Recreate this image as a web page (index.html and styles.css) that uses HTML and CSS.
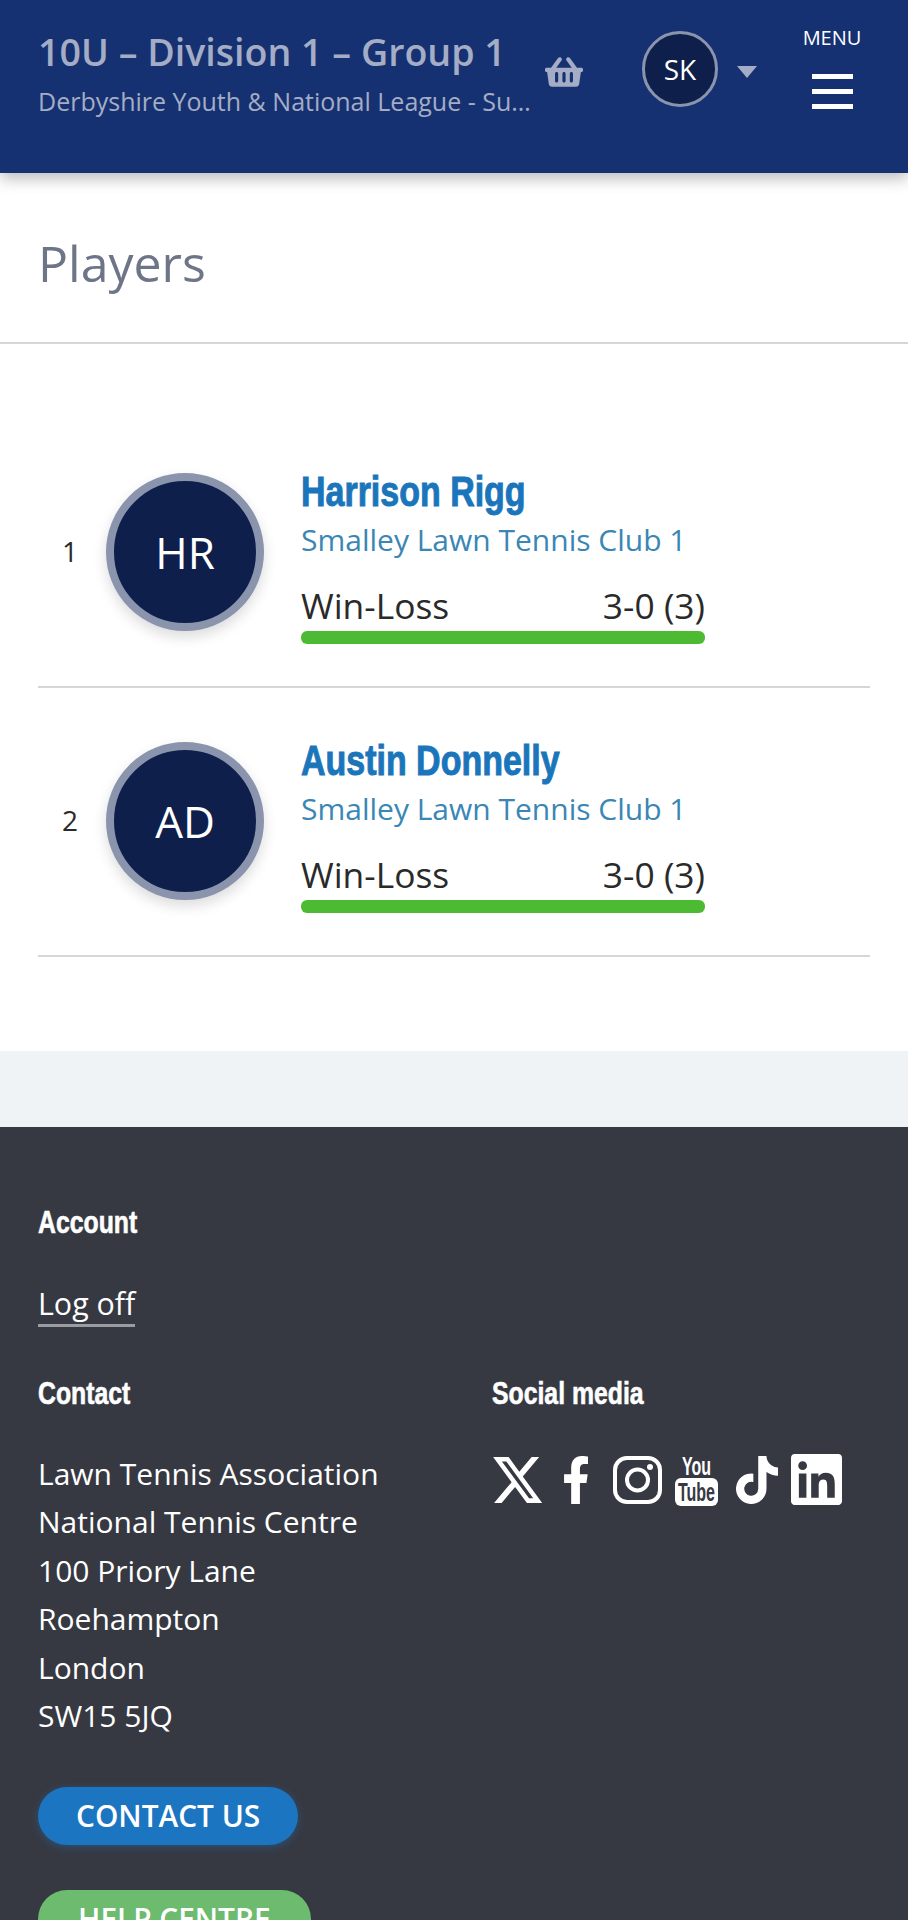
FILE: index.html
```html
<!DOCTYPE html>
<html lang="en">
<head>
    <meta charset="UTF-8">
    <meta name="viewport" content="width=device-width, initial-scale=1.0">
    <title>Players</title>
    <link rel="stylesheet" href="styles.css">
</head>
<body>
    <header class="top-bar">
        <div class="titles">
            <h1>10U – Division 1 – Group 1</h1>
            <p>Derbyshire Youth &amp; National League - Summer 2024</p>
        </div>
        <svg class="basket" viewBox="0 0 576 512" fill="currentColor"><path d="M576 216v16c0 13.255-10.745 24-24 24h-8l-26.113 182.788C514.509 462.435 494.257 480 470.37 480H105.63c-23.887 0-44.139-17.565-47.518-41.212L32 256h-8c-13.255 0-24-10.745-24-24v-16c0-13.255 10.745-24 24-24h67.341l106.78-146.821c10.395-14.292 30.407-17.453 44.701-7.058 14.293 10.395 17.453 30.408 7.058 44.701L170.477 192h235.046L326.12 82.821c-10.395-14.292-7.234-34.306 7.059-44.701 14.291-10.395 34.306-7.235 44.701 7.058L484.659 192H552c13.255 0 24 10.745 24 24zM312 392V280c0-13.255-10.745-24-24-24s-24 10.745-24 24v112c0 13.255 10.745 24 24 24s24-10.745 24-24zm112 0V280c0-13.255-10.745-24-24-24s-24 10.745-24 24v112c0 13.255 10.745 24 24 24s24-10.745 24-24zm-224 0V280c0-13.255-10.745-24-24-24s-24 10.745-24 24v112c0 13.255 10.745 24 24 24s24-10.745 24-24z"/></svg>
        <div class="user-badge">SK</div>
        <span class="caret"></span>
        <div class="menu">
            <span>MENU</span>
            <div class="burger"><i></i><i></i><i></i></div>
        </div>
    </header>

    <main class="content">
        <h2 class="page-title">Players</h2>
        <div class="player-list">
            <div class="player">
                <span class="rank">1</span>
                <div class="avatar">HR</div>
                <div class="info">
                    <a class="name">Harrison Rigg</a>
                    <a class="club">Smalley Lawn Tennis Club 1</a>
                    <div class="stat"><span>Win-Loss</span><span>3-0 (3)</span></div>
                    <div class="bar"></div>
                </div>
            </div>
            <div class="player">
                <span class="rank">2</span>
                <div class="avatar">AD</div>
                <div class="info">
                    <a class="name">Austin Donnelly</a>
                    <a class="club">Smalley Lawn Tennis Club 1</a>
                    <div class="stat"><span>Win-Loss</span><span>3-0 (3)</span></div>
                    <div class="bar"></div>
                </div>
            </div>
        </div>
    </main>

    <div class="band"></div>

    <footer class="footer">
        <h3>Account</h3>
        <a class="log-off">Log off</a>
        <div class="footer-cols">
            <div class="contact">
                <h3>Contact</h3>
                <address>
                    Lawn Tennis Association<br>
                    National Tennis Centre<br>
                    100 Priory Lane<br>
                    Roehampton<br>
                    London<br>
                    SW15 5JQ
                </address>
                <a class="btn btn-blue">CONTACT US</a>
                <a class="btn btn-green">HELP CENTRE</a>
            </div>
            <div class="social">
                <h3>Social media</h3>
                <div class="social-icons">
                    <svg class="ic-x" viewBox="1.2 2.2 21.6 19.6" fill="#fff" preserveAspectRatio="none"><path d="M18.244 2.25h3.308l-7.227 8.26 8.502 11.24H16.17l-5.214-6.817L4.99 21.75H1.68l7.73-8.835L1.254 2.25H8.08l4.713 6.231zm-1.161 17.52h1.833L7.084 4.126H5.117z"/></svg>
                    <svg class="ic-f" viewBox="22 0 298 512" fill="#fff" preserveAspectRatio="none"><path d="M279.14 288l14.22-92.66h-88.91v-60.13c0-25.35 12.42-50.06 52.24-50.06h40.42V6.26S260.43 0 225.36 0c-73.22 0-121.08 44.38-121.08 124.72v70.62H22.89V288h81.39v224h100.17V288z"/></svg>
                    <svg class="ic-insta" viewBox="0 0 49 48" fill="none" stroke="#fff"><rect x="2" y="2" width="45" height="44" rx="12" stroke-width="4"/><circle cx="24.5" cy="24" r="10.5" stroke-width="4"/><circle cx="37" cy="11" r="3" fill="#fff" stroke="none"/></svg>
                    <svg class="ic-yt" viewBox="0 0 43 52"><text class="yt-you" x="7" y="21" textLength="29" lengthAdjust="spacingAndGlyphs">You</text><rect x="0" y="24" width="43" height="28" rx="6" fill="#fff"/><text class="yt-tube" x="3" y="47" textLength="37" lengthAdjust="spacingAndGlyphs">Tube</text></svg>
                    <svg class="ic-tiktok" viewBox="0 0 448 512" fill="#fff" preserveAspectRatio="none"><path d="M448,209.91a210.06,210.06,0,0,1-122.77-39.25V349.38A162.55,162.55,0,1,1,185,188.31V278.2a74.62,74.62,0,1,0,52.23,71.18V0l88,0a121.18,121.18,0,0,0,1.86,22.17h0A122.18,122.18,0,0,0,381,102.39a121.43,121.43,0,0,0,67,20.14Z"/></svg>
                    <svg class="ic-in" viewBox="0 32 448 448" fill="#fff" preserveAspectRatio="none"><path d="M416 32H31.9C14.3 32 0 46.5 0 64.3v383.4C0 465.5 14.3 480 31.9 480H416c17.6 0 32-14.5 32-32.3V64.3c0-17.8-14.4-32.3-32-32.3zM135.4 416H69V202.2h66.5V416zm-33.2-243c-21.3 0-38.5-17.3-38.5-38.5S80.9 96 102.2 96c21.2 0 38.5 17.3 38.5 38.5 0 21.3-17.2 38.5-38.5 38.5zm282.1 243h-66.4V312c0-24.8-.5-56.7-34.5-56.7-34.6 0-39.9 27-39.9 54.9V416h-66.4V202.2h63.7v29.2h.9c8.9-16.8 30.6-34.5 62.9-34.5 67.2 0 79.7 44.3 79.7 101.9V416z"/></svg>
                </div>
            </div>
        </div>
    </footer>
</body>
</html>
```

FILE: styles.css
```css
* {
    margin: 0;
    padding: 0;
    box-sizing: border-box;
    font-family: "Open Sans", sans-serif;
}
html, body {
    height: 1920px;
    overflow: hidden;
}
body {
    background: #fff;
}

/* Top bar */
.top-bar {
    position: relative;
    z-index: 2;
    display: flex;
    align-items: flex-start;
    height: 173px;
    padding-left: 38px;
    background: #163172;
    color: #a4adc5;
    box-shadow: 0 6px 14px rgba(0, 0, 0, .25);
}
.titles {
    width: 495px;
    flex: none;
    margin-top: 29px;
}
.titles h1 {
    font-size: 37.6px;
    font-weight: 600;
    line-height: 46px;
    white-space: nowrap;
}
.titles p {
    font-size: 25px;
    line-height: 34px;
    margin-top: 9px;
    white-space: nowrap;
    overflow: hidden;
    text-overflow: ellipsis;
}
.basket {
    flex: none;
    width: 38px;
    height: 34px;
    margin: 55px 0 0 12px;
}
.user-badge {
    flex: none;
    display: flex;
    justify-content: center;
    align-items: center;
    width: 76px;
    height: 76px;
    margin: 31px 0 0 59px;
    border: 3px solid #8a94ad;
    border-radius: 50%;
    background: #0f1f4b;
    color: #fff;
    font-size: 28px;
}
.caret {
    flex: none;
    width: 0;
    height: 0;
    margin: 66px 0 0 19px;
    border-left: 10px solid transparent;
    border-right: 10px solid transparent;
    border-top: 12px solid #a4adc5;
}
.menu {
    flex: none;
    display: flex;
    flex-direction: column;
    align-items: center;
    width: 60px;
    margin: 24px 0 0 45px;
    color: #fff;
    font-size: 20px;
    line-height: 28px;
}
.burger {
    width: 41px;
    margin-top: 22px;
}
.burger i {
    display: block;
    height: 5px;
    margin-bottom: 10px;
    background: #fff;
}

/* Players */
.page-title {
    height: 171px;
    padding: 57px 38px 0;
    border-bottom: 2px solid #d6d6d6;
    color: #6f7588;
    font-size: 50px;
    font-weight: 400;
    line-height: 66px;
}
.player-list {
    margin: 0 38px;
    padding: 75px 0 94px;
}
.player {
    display: flex;
    align-items: flex-start;
    height: 268.5px;
    padding-top: 54px;
    border-bottom: 2px solid #d6d6d6;
}
.player:first-child {
    height: 269px;
}
.rank {
    flex: none;
    width: 64px;
    margin-right: 4px;
    color: #2a2a2a;
    font-size: 28px;
    line-height: 157px;
    text-align: center;
}
.avatar {
    flex: none;
    display: flex;
    justify-content: center;
    align-items: center;
    width: 158px;
    height: 158px;
    border: 8px solid #8a94ad;
    border-radius: 50%;
    background: #0f1f4b;
    box-shadow: 0 6px 14px rgba(0, 0, 0, .14);
    color: #fff;
    font-size: 44px;
}
.info {
    width: 404px;
    margin-left: 37px;
}
/* no condensed font here, so squeeze a bold one */
.name {
    display: block;
    margin-top: -2px;
    color: #1b75bb;
    font-family: "Liberation Sans", sans-serif;
    font-size: 43px;
    font-weight: 700;
    line-height: 40px;
    white-space: nowrap;
    -webkit-text-stroke: 1px #1b75bb;
    transform: scaleX(.79);
    transform-origin: left;
}
.club {
    display: block;
    margin-top: 10px;
    color: #3a86b5;
    font-size: 30px;
    line-height: 38px;
}
.stat {
    display: flex;
    justify-content: space-between;
    margin-top: 24px;
    color: #2a2a2a;
    font-size: 35.4px;
    line-height: 44px;
}
.bar {
    height: 13px;
    margin-top: 4px;
    border-radius: 6px;
    background: #4cbb33;
}

.band {
    height: 76px;
    background: #f0f3f6;
}

/* Footer */
.footer {
    height: 800px;
    padding: 78px 38px 0;
    background: #373942;
    color: #fff;
}
.footer h3 {
    font-family: "Liberation Sans", sans-serif;
    font-size: 31px;
    font-weight: 700;
    line-height: 36px;
    white-space: nowrap;
    -webkit-text-stroke: .6px #fff;
    transform: scaleX(.8);
    transform-origin: left;
}
.log-off {
    display: inline-block;
    margin-top: 42px;
    border-bottom: 3px solid #9a9ca3;
    font-size: 30.4px;
    font-weight: 400;
    line-height: 41px;
}
.footer-cols {
    display: flex;
    margin-top: 49px;
}
.contact {
    width: 454px;
    flex: none;
}
address {
    margin-top: 38px;
    font-size: 30px;
    font-style: normal;
    line-height: 48.6px;
}
.btn {
    display: block;
    width: fit-content;
    border-radius: 29px;
    color: #fff;
    font-size: 29.8px;
    font-weight: 600;
    line-height: 58px;
    padding: 0 38px;
}
.btn-blue {
    margin-top: 46px;
    background: #1b75c0;
    box-shadow: 0 2px 8px rgba(27, 117, 192, .4);
}
.btn-green {
    margin-top: 45px;
    padding: 0 40px;
    background: #6cbb6e;
}
.social-icons {
    display: flex;
    align-items: center;
    margin-top: 42px;
}
.ic-x { width: 49px; height: 46px; margin-left: 1px; }
.ic-f { width: 26px; height: 48px; margin-left: 22px; }
.ic-insta { width: 49px; height: 48px; margin-left: 23px; }
.ic-yt { width: 43px; height: 52px; margin-left: 13px; }
.ic-tiktok { width: 42px; height: 48px; margin-left: 18px; }
.ic-in { width: 51px; height: 51px; margin-left: 13px; }
.yt-you {
    fill: #fff;
    font-family: "Liberation Sans", sans-serif;
    font-size: 25px;
    font-weight: 700;
}
.yt-tube {
    fill: #373942;
    font-family: "Liberation Sans", sans-serif;
    font-size: 25px;
    font-weight: 700;
}
```
